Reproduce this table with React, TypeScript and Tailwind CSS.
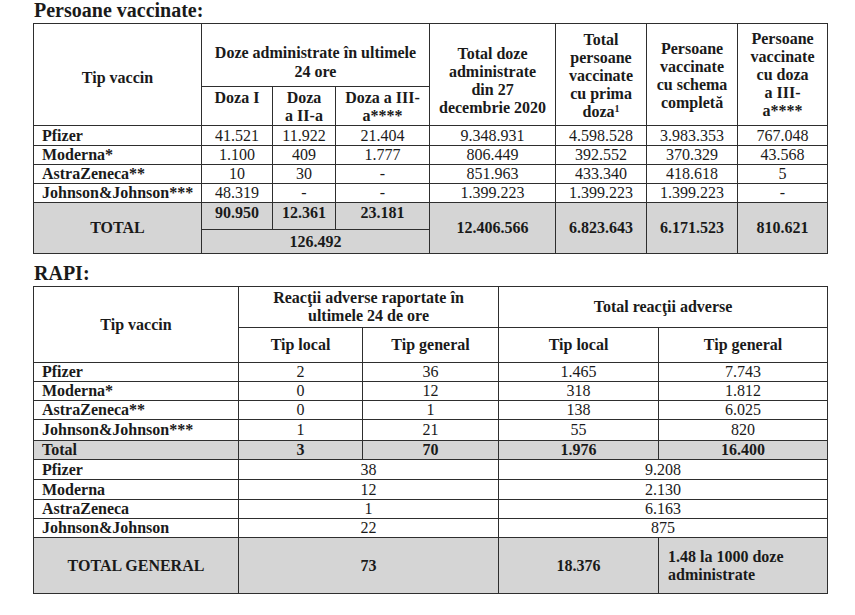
import React from "react";

const cell = "border border-[#2e2e2e] p-0 leading-[18px]";
const label = `${cell} text-left pl-[8px] font-bold`;
const num = `${cell} text-center`;
const grey = "bg-[#d5d5d5]";

const VACCINES = [
  { name: "Pfizer", d1: "41.521", d2: "11.922", d3: "21.404", total: "9.348.931", first: "4.598.528", full: "3.983.353", third: "767.048", h: "h-[20px]" },
  { name: "Moderna*", d1: "1.100", d2: "409", d3: "1.777", total: "806.449", first: "392.552", full: "370.329", third: "43.568", h: "h-[19px]" },
  { name: "AstraZeneca**", d1: "10", d2: "30", d3: "-", total: "851.963", first: "433.340", full: "418.618", third: "5", h: "h-[19px]" },
  { name: "Johnson&Johnson***", d1: "48.319", d2: "-", d3: "-", total: "1.399.223", first: "1.399.223", full: "1.399.223", third: "-", h: "h-[19px]" },
];

const REACTIONS = [
  { name: "Pfizer", l24: "2", g24: "36", l: "1.465", g: "7.743", h: "h-[19px]" },
  { name: "Moderna*", l24: "0", g24: "12", l: "318", g: "1.812", h: "h-[19px]" },
  { name: "AstraZeneca**", l24: "0", g24: "1", l: "138", g: "6.025", h: "h-[19px]" },
  { name: "Johnson&Johnson***", l24: "1", g24: "21", l: "55", g: "820", h: "h-[21px]" },
];

const BY_VACCINE = [
  { name: "Pfizer", a: "38", b: "9.208", h: "h-[20px]" },
  { name: "Moderna", a: "12", b: "2.130", h: "h-[20px]" },
  { name: "AstraZeneca", a: "1", b: "6.163", h: "h-[19px]" },
  { name: "Johnson&Johnson", a: "22", b: "875", h: "h-[19px]" },
];

export default function App() {
  return (
    <div className="w-[855px] h-[615px] bg-white text-[16px] text-[#1a1a1a] pl-[33px] font-['Liberation_Serif',serif]">
      <div className="h-[23px] pl-[1px] text-[20px] leading-[21px] font-bold">Persoane vaccinate:</div>

      <table className="table-fixed border-collapse w-[794px]">
        <colgroup>
          <col className="w-[168px]" />
          <col className="w-[71px]" />
          <col className="w-[63px]" />
          <col className="w-[94px]" />
          <col className="w-[126px]" />
          <col className="w-[91px]" />
          <col className="w-[91px]" />
          <col className="w-[90px]" />
        </colgroup>
        <tbody>
          <tr className="h-[63px] font-bold">
            <td rowSpan={2} className={`${cell} text-center align-middle pt-[6px]`}>Tip vaccin</td>
            <td colSpan={3} className={`${cell} text-center align-bottom pb-[5px] leading-[19px]`}>
              Doze administrate în ultimele
              <br />
              24 ore
            </td>
            <td rowSpan={2} className={`${cell} text-center align-middle pt-[12px]`}>
              Total doze
              <br />
              administrate
              <br />
              din 27
              <br />
              decembrie 2020
            </td>
            <td rowSpan={2} className={`${cell} text-center align-middle pt-[2px]`}>
              Total
              <br />
              persoane
              <br />
              vaccinate
              <br />
              cu prima
              <br />
              doza<sup className="text-[10px]">1</sup>
            </td>
            <td rowSpan={2} className={`${cell} text-center align-middle pt-[2px]`}>
              Persoane
              <br />
              vaccinate
              <br />
              cu schema
              <br />
              completă
            </td>
            <td rowSpan={2} className={`${cell} text-center align-middle`}>
              Persoane
              <br />
              vaccinate
              <br />
              cu doza
              <br />
              a III-
              <br />
              a****
            </td>
          </tr>
          <tr className="h-[38px] font-bold">
            <td className={`${cell} text-center align-top pt-[2px]`}>Doza I</td>
            <td className={`${cell} text-center align-top pt-[2px]`}>
              Doza
              <br />
              a II-a
            </td>
            <td className={`${cell} text-center align-top pt-[2px]`}>
              Doza a III-
              <br />
              a****
            </td>
          </tr>
          {VACCINES.map((v) => (
            <tr key={v.name} className={v.h}>
              <td className={label}>{v.name}</td>
              <td className={num}>{v.d1}</td>
              <td className={num}>{v.d2}</td>
              <td className={num}>{v.d3}</td>
              <td className={num}>{v.total}</td>
              <td className={num}>{v.first}</td>
              <td className={num}>{v.full}</td>
              <td className={num}>{v.third}</td>
            </tr>
          ))}
          <tr className={`h-[27px] font-bold ${grey}`}>
            <td rowSpan={2} className={`${cell} text-center`}>TOTAL</td>
            <td className={`${cell} text-center align-top pt-[1px]`}>90.950</td>
            <td className={`${cell} text-center align-top pt-[1px]`}>12.361</td>
            <td className={`${cell} text-center align-top pt-[1px]`}>23.181</td>
            <td rowSpan={2} className={`${cell} text-center`}>12.406.566</td>
            <td rowSpan={2} className={`${cell} text-center`}>6.823.643</td>
            <td rowSpan={2} className={`${cell} text-center`}>6.171.523</td>
            <td rowSpan={2} className={`${cell} text-center`}>810.621</td>
          </tr>
          <tr className={`h-[24px] font-bold ${grey}`}>
            <td colSpan={3} className={`${cell} text-center`}>126.492</td>
          </tr>
        </tbody>
      </table>

      <div className="h-[32px] pt-[10px] pl-[1px] text-[20px] leading-[18px] font-bold">RAPI:</div>

      <table className="table-fixed border-collapse w-[794px]">
        <colgroup>
          <col className="w-[205px]" />
          <col className="w-[124px]" />
          <col className="w-[136px]" />
          <col className="w-[160px]" />
          <col className="w-[169px]" />
        </colgroup>
        <tbody>
          <tr className="h-[41px] font-bold">
            <td rowSpan={2} className={`${cell} text-center`}>Tip vaccin</td>
            <td colSpan={2} className={`${cell} text-center`}>
              Reacţii adverse raportate în
              <br />
              ultimele 24 de ore
            </td>
            <td colSpan={2} className={`${cell} text-center`}>Total reacţii adverse</td>
          </tr>
          <tr className="h-[35px] font-bold">
            <td className={`${cell} text-center`}>Tip local</td>
            <td className={`${cell} text-center`}>Tip general</td>
            <td className={`${cell} text-center`}>Tip local</td>
            <td className={`${cell} text-center`}>Tip general</td>
          </tr>
          {REACTIONS.map((r) => (
            <tr key={r.name} className={r.h}>
              <td className={label}>{r.name}</td>
              <td className={num}>{r.l24}</td>
              <td className={num}>{r.g24}</td>
              <td className={num}>{r.l}</td>
              <td className={num}>{r.g}</td>
            </tr>
          ))}
          <tr className={`h-[19px] font-bold ${grey}`}>
            <td className={label}>Total</td>
            <td className={num}>3</td>
            <td className={num}>70</td>
            <td className={num}>1.976</td>
            <td className={num}>16.400</td>
          </tr>
          {BY_VACCINE.map((r) => (
            <tr key={r.name} className={r.h}>
              <td className={label}>{r.name}</td>
              <td colSpan={2} className={num}>{r.a}</td>
              <td colSpan={2} className={num}>{r.b}</td>
            </tr>
          ))}
          <tr className={`h-[56px] font-bold ${grey}`}>
            <td className={`${cell} text-center`}>TOTAL GENERAL</td>
            <td colSpan={2} className={`${cell} text-center`}>73</td>
            <td className={`${cell} text-center`}>18.376</td>
            <td className={`${cell} text-left pl-[9px]`}>
              1.48 la 1000 doze
              <br />
              administrate
            </td>
          </tr>
        </tbody>
      </table>
    </div>
  );
}
